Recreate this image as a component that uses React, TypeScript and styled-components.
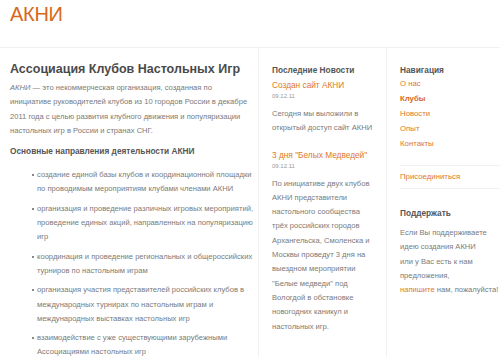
import React from 'react';
import styled, { createGlobalStyle } from 'styled-components';

const GlobalStyle = createGlobalStyle`
  body {
    margin: 0;
    background: #fff;
    font-family: "Liberation Sans", Arial, sans-serif;
    color: #777;
  }
`;

const Page = styled.div`
  width: 500px;
  height: 357px;
  overflow: hidden;
`;

const Header = styled.header`
  height: 47px;
  padding: 0 10px;
  border-bottom: 1px solid #f2f2f2;
`;

const Logo = styled.h1`
  margin: 0;
  padding-top: 3px;
  font-size: 20px;
  font-weight: normal;
  color: #d8681a;
  letter-spacing: -0.3px;
`;

const Columns = styled.div`
  display: grid;
  grid-template-columns: 258px 128px 1fr;
  height: 309px;
`;

const Column = styled.section<{ $pad?: string }>`
  padding: ${p => p.$pad || '0'};
  & + & {
    border-left: 1px solid #f2f2f2;
  }
`;

const Title = styled.h2`
  margin: 0 0 4px;
  font-size: 12.5px;
  font-weight: bold;
  color: #4a4a4a;
  line-height: 16px;
`;

const Text = styled.p<{ $gap?: number }>`
  margin: 0 0 ${p => p.$gap ?? 6}px;
  font-size: 7.6px;
  line-height: 14.3px;
  color: #7a7a7a;
`;

const SubTitle = styled.h3<{ $gap?: number }>`
  margin: 0 0 ${p => p.$gap ?? 4}px;
  font-size: 8.3px;
  font-weight: bold;
  line-height: 14px;
  color: #555;
`;

const List = styled.ul`
  margin: 0;
  padding: 6px 0 0 27px;
  list-style: none;
`;

const Item = styled.li`
  position: relative;
  margin-bottom: 5px;
  font-size: 7.6px;
  line-height: 14.3px;
  color: #7a7a7a;
  &::before {
    content: '';
    position: absolute;
    left: -5px;
    top: 6px;
    width: 2px;
    height: 2px;
    background: #888;
  }
`;

const NewsLink = styled.a`
  display: block;
  font-size: 8.3px;
  line-height: 12px;
  color: #e0781f;
  text-decoration: none;
`;

const Date = styled.div`
  font-size: 6px;
  line-height: 10px;
  color: #999;
  margin-bottom: 6px;
`;

const News = styled.div`
  margin-bottom: 13px;
`;

const NavList = styled.ul`
  margin: 0;
  padding: 0 0 14px;
  list-style: none;
  border-bottom: 1px solid #f2f2f2;
`;

const NavItem = styled.li<{ $active?: boolean }>`
  font-size: 7.8px;
  line-height: 15px;
  color: ${p => (p.$active ? '#d8681a' : '#e0781f')};
  font-weight: ${p => (p.$active ? 'bold' : 'normal')};
`;

const JoinBlock = styled.div`
  padding: 4px 0 4px;
  border-bottom: 1px solid #f2f2f2;
  font-size: 7.8px;
  line-height: 14px;
  color: #e0781f;
`;

const Support = styled.div`
  padding-top: 17px;
`;

const Accent = styled.span`
  color: #e0781f;
`;

const navItems = ['О нас', 'Клубы', 'Новости', 'Опыт', 'Контакты'];

const directions = [
  'создание единой базы клубов и координационной площадки по проводимым мероприятиям клубами членами АКНИ',
  'организация и проведение различных игровых мероприятий, проведение единых акций, направленных на популяризацию игр',
  'координация и проведение региональных и общероссийских турниров по настольным играм',
  'организация участия представителей российских клубов в международных турнирах по настольным играм и международных выставках настольных игр',
  'взаимодействие с уже существующими зарубежными Ассоциациями настольных игр',
];

const App = (): JSX.Element => {
  return (
    <Page>
      <GlobalStyle />
      <Header>
        <Logo>АКНИ</Logo>
      </Header>
      <Columns>
        <Column $pad="13px 4px 0 10px">
          <Title>Ассоциация Клубов Настольных Игр</Title>
          <Text>
            <i>АКНИ</i> — это некоммерческая организация, созданная по
            <br />
            инициативе руководителей клубов из 10 городов России в декабре
            <br />
            2011 года с целью развития клубного движения и популяризации
            <br />
            настольных игр в России и странах СНГ.
          </Text>
          <SubTitle>Основные направления деятельности АКНИ</SubTitle>
          <List>
            {directions.map(d => (
              <Item key={d}>{d}</Item>
            ))}
          </List>
        </Column>
        <Column $pad="15px 13px 0 13px">
          <SubTitle $gap={2}>Последние Новости</SubTitle>
          <News>
            <NewsLink>Создан сайт АКНИ</NewsLink>
            <Date>09.12.11</Date>
            <Text $gap={0}>Сегодня мы выложили в открытый доступ сайт АКНИ</Text>
          </News>
          <News>
            <NewsLink>3 дня "Белых Медведей"</NewsLink>
            <Date>09.12.11</Date>
            <Text $gap={0}>
              По инициативе двух клубов АКНИ представители настольного сообщества трёх российских
              городов Архангельска, Смоленска и Москвы проведут 3 дня на выездном мероприятии
              "Белые медведи" под Вологдой в обстановке новогодних каникул и настольных игр.
            </Text>
          </News>
        </Column>
        <Column $pad="15px 0 0 13px">
          <SubTitle $gap={-1}>Навигация</SubTitle>
          <NavList>
            {navItems.map(n => (
              <NavItem key={n} $active={n === 'Клубы'}>{n}</NavItem>
            ))}
          </NavList>
          <JoinBlock>Присоединиться</JoinBlock>
          <Support>
            <SubTitle $gap={6}>Поддержать</SubTitle>
            <Text>
              Если Вы поддерживаете
              <br />
              идею создания АКНИ
              <br />
              или у Вас есть к нам
              <br />
              предложения,
              <br />
              <Accent>напишите</Accent> нам, пожалуйста!
            </Text>
          </Support>
        </Column>
      </Columns>
    </Page>
  );
};

export default App;
